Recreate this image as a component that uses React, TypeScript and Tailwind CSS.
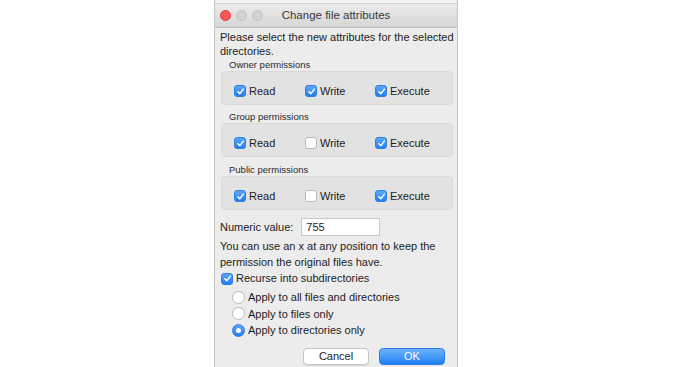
import React from 'react';

const Check = ({ checked }: { checked: boolean }) =>
  checked ? (
    <span className="w-[12px] h-[12px] rounded-[3px] bg-gradient-to-b from-[#5aa6fb] to-[#1f7ef4] border border-[#2f7fe0] flex items-center justify-center shrink-0">
      <svg width="9" height="9" viewBox="0 0 10 10" fill="none">
        <path d="M2 5.3 L4.2 7.5 L8.2 2.3" stroke="white" strokeWidth="1.6" strokeLinecap="round" strokeLinejoin="round" />
      </svg>
    </span>
  ) : (
    <span className="w-[12px] h-[12px] rounded-[3px] bg-white border border-[#b9b9b9] shrink-0" />
  );

const Radio = ({ on }: { on: boolean }) =>
  on ? (
    <span className="w-[13px] h-[13px] rounded-full bg-gradient-to-b from-[#5aa6fb] to-[#1f7ef4] border border-[#2f7fe0] flex items-center justify-center shrink-0">
      <span className="w-[5px] h-[5px] rounded-full bg-white" />
    </span>
  ) : (
    <span className="w-[13px] h-[13px] rounded-full bg-white border border-[#b9b9b9] shrink-0" />
  );

const PermBox = ({ title, perms, gap }: { title: string; perms: boolean[]; gap: string }) => (
  <div className={gap}>
    <div className="ml-[9px] text-[9.5px] leading-[12px] text-[#2a2a2a]">{title}</div>
    <div className="ml-[1px] w-[232px] h-[34px] pt-[11px] pl-[12px] rounded-[4px] bg-[#e2e2e2] border border-[#dadada]">
      <div className="grid grid-cols-[71px_70px_1fr] items-center h-[13px]">
        {['Read', 'Write', 'Execute'].map((l, i) => (
          <label key={l} className="flex items-center gap-[3px]">
            <Check checked={perms[i]} />
            <span>{l}</span>
          </label>
        ))}
      </div>
    </div>
  </div>
);

export default function App() {
  return (
    <div className="w-[680px] h-[367px] overflow-hidden bg-white font-['Liberation_Sans',Arial,sans-serif] text-[11px] text-[#1c1c1c]">
      <div className="ml-[214px] w-[244px] h-full flex flex-col bg-[#ececec] border-x border-[#c6c6c6]">
        <div className="h-[4px] bg-[#f2f2f2] border-b border-[#d0d0d0] shrink-0" />
        {/* title bar */}
        <div className="relative h-[24px] shrink-0 flex items-center gap-[5px] pl-[5px] bg-gradient-to-b from-[#ebebeb] to-[#d6d6d6] border-b border-[#bdbdbd]">
          <span className="w-[11px] h-[11px] rounded-full bg-[#fc5753] border border-[#df3d3a]" />
          <span className="w-[11px] h-[11px] rounded-full bg-[#d3d3d3] border border-[#c2c2c2]" />
          <span className="w-[11px] h-[11px] rounded-full bg-[#d3d3d3] border border-[#c2c2c2]" />
          <div className="absolute inset-0 flex items-center justify-center text-[11.5px] text-[#3a3a3a]">
            Change file attributes
          </div>
        </div>

        <div className="flex flex-col px-[5px] pt-[2px]">
          <p className="leading-[14px] mr-[-5px]">Please select the new attributes for the selected directories.</p>

          <PermBox title="Owner permissions" perms={[true, true, true]} gap="mt-[1px]" />
          <PermBox title="Group permissions" perms={[true, false, true]} gap="mt-[6px]" />
          <PermBox title="Public permissions" perms={[true, false, true]} gap="mt-[7px]" />

          <div className="mt-[8px] flex items-center gap-[8px]">
            <span>Numeric value:</span>
            <div className="w-[79px] h-[18px] bg-white border border-[#c8c8c8] flex items-center px-[4px]">755</div>
          </div>

          <p className="mt-[2px] leading-[16px]">
            You can use an x at any position to keep the permission the original files have.
          </p>

          <label className="mt-[1px] h-[15px] flex items-center gap-[3px] ml-[1px]">
            <Check checked />
            <span>Recurse into subdirectories</span>
          </label>

          <div className="mt-[3px] ml-[12px] flex flex-col">
            {[
              ['Apply to all files and directories', false],
              ['Apply to files only', false],
              ['Apply to directories only', true],
            ].map(([t, on]) => (
              <label key={t as string} className="h-[16.5px] flex items-center gap-[3px]">
                <Radio on={on as boolean} />
                <span>{t as string}</span>
              </label>
            ))}
          </div>

          <div className="mt-[9px] flex justify-end gap-[10px] pr-[7px]">
            <button className="w-[66px] h-[17px] rounded-[4px] bg-white border border-[#c4c4c4] shadow-[0_1px_0_rgba(0,0,0,0.08)] text-[11px] leading-none">
              Cancel
            </button>
            <button className="w-[66px] h-[17px] rounded-[4px] bg-gradient-to-b from-[#6cb3fa] to-[#1a7ef5] border border-[#2a7de3] text-white text-[11px] leading-none">
              OK
            </button>
          </div>
        </div>
      </div>
    </div>
  );
}
